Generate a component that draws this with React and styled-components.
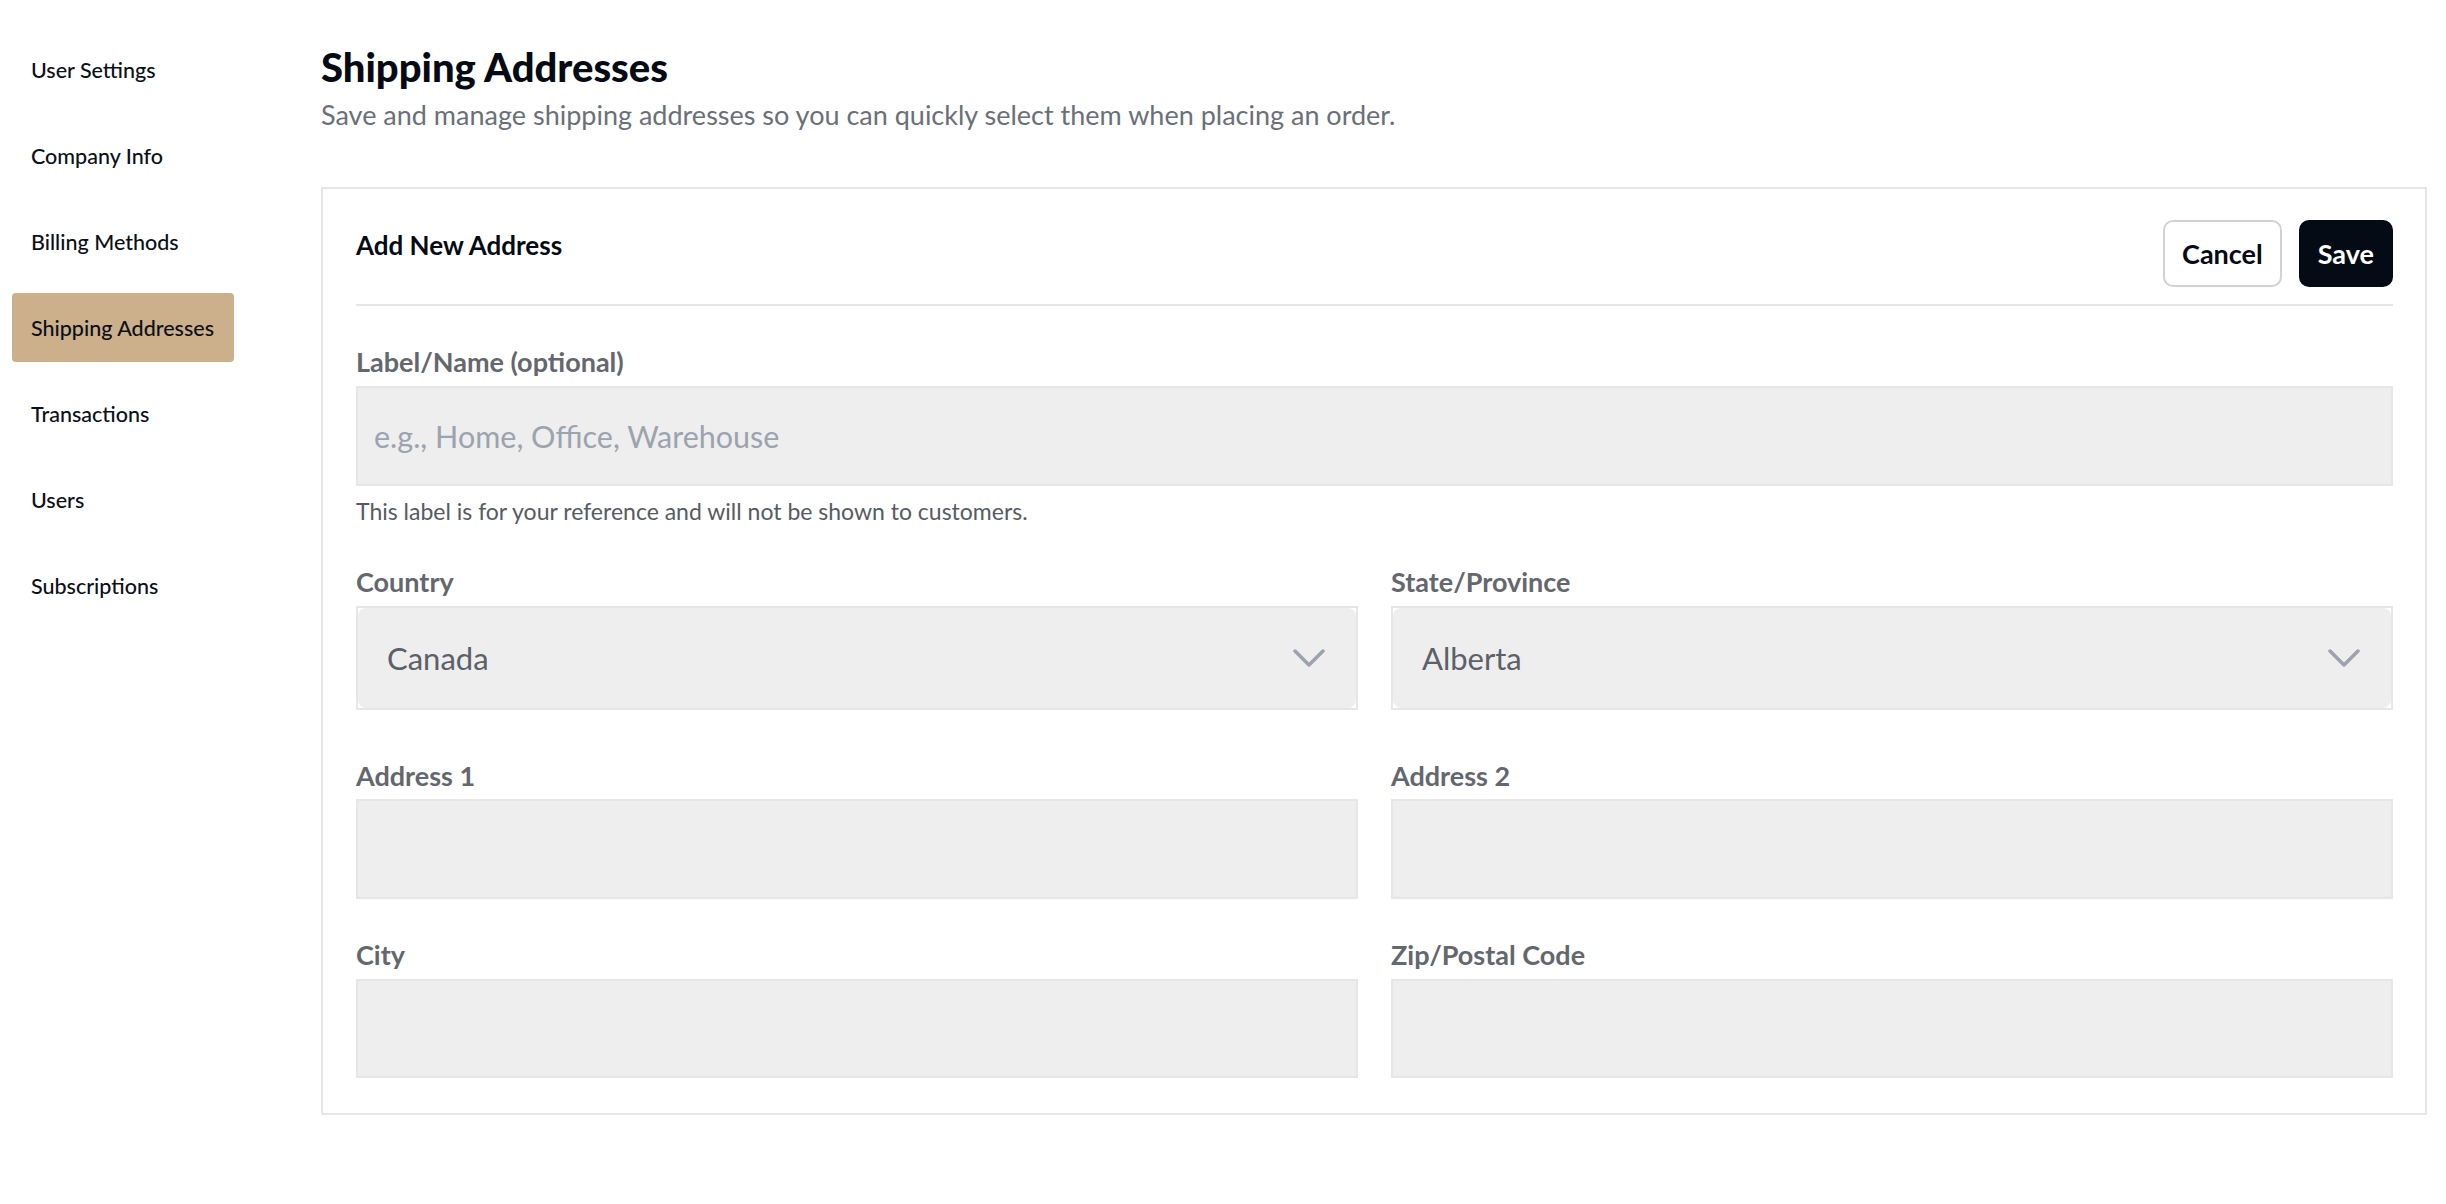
import styled, { createGlobalStyle } from "styled-components";

const GlobalStyle = createGlobalStyle`
  * {
    box-sizing: border-box;
  }
  body {
    margin: 0;
    background: #ffffff;
    font-family: Lato, "Noto Sans", sans-serif;
    color: #0b0f17;
  }
`

const Layout = styled.div`
    display: grid;
    grid-template-columns: 222px 1fr;
    column-gap: 87px;
    padding: 0 19px 0 12px;
    min-height: 1204px;
`
const Sidebar = styled.nav`
    display: flex;
    flex-direction: column;
    gap: 17px;
    padding-top: 35px;
`
const NavItem = styled.div`
    height: 69px;
    display: flex;
    align-items: center;
    padding-left: 19px;
    border-radius: 4px;
    font-size: 21.5px;
    font-weight: 500;
    color: #0b0f17;
    white-space: nowrap;
    background-color: ${(p) => (p.$active ? "#ccb08c" : "transparent")};
    cursor: pointer;
`
const Main = styled.main`
    padding-top: 44px;
`
const Title = styled.h1`
    margin: 0;
    font-size: 40px;
    line-height: 46px;
    font-weight: 900;
    color: #050a14;
`
const Subtitle = styled.p`
    margin: 8px 0 0;
    font-size: 27px;
    line-height: 34px;
    color: #6b7078;
`
const Card = styled.section`
    margin-top: 55px;
    border: 2px solid #e6e6e6;
    padding: 31px 32px 35px 33px;
`
const CardHeader = styled.div`
    display: flex;
    justify-content: space-between;
    align-items: flex-start;
    padding-bottom: 17px;
    border-bottom: 2px solid #e6e6e6;
`
const CardTitle = styled.h2`
    margin: 0;
    font-size: 26px;
    line-height: 50px;
    font-weight: 700;
    color: #050a14;
`
const Actions = styled.div`
    display: flex;
    gap: 17px;
`
const Button = styled.button`
    height: 67px;
    padding: 0 17px;
    border-radius: 10px;
    font-family: inherit;
    font-size: 27px;
    font-weight: 700;
    cursor: pointer;
    border: 2px solid ${(p) => (p.$primary ? "#050b14" : "#d2d2d2")};
    background-color: ${(p) => (p.$primary ? "#050b14" : "#ffffff")};
    color: ${(p) => (p.$primary ? "#ffffff" : "#050a14")};
`
const Form = styled.div`
    display: flex;
    flex-direction: column;
    gap: 38px;
    padding-top: 38px;
`
const Row = styled.div`
    display: grid;
    grid-template-columns: 1fr 1fr;
    column-gap: 33px;
    padding-bottom: ${(p) => (p.$extra ? "10px" : "0")};
`
const Field = styled.div`
    display: flex;
    flex-direction: column;
`
const Label = styled.label`
    font-size: 27px;
    line-height: 36px;
    font-weight: 700;
    color: #64676d;
    margin-bottom: ${(p) => (p.$tight ? "5px" : "6px")};
`
const Input = styled.input`
    height: ${(p) => p.$h || 100}px;
    width: 100%;
    border: 2px solid #e6e6e6;
    background-color: #eeeeee;
    padding: 0 16px;
    font-family: inherit;
    font-size: 30.5px;
    color: #5f636a;
    outline: none;

    &::placeholder {
        color: #9ca3af;
    }
`
const Helper = styled.p`
    margin: 10px 0 0;
    font-size: 23px;
    line-height: 30px;
    color: #565b62;
`
const SelectFrame = styled.div`
    height: 104px;
    border: 2px solid #e6e6e6;
    background-color: #ffffff;
`
const SelectInner = styled.div`
    height: 100%;
    display: flex;
    align-items: center;
    justify-content: space-between;
    padding: 0 31px 0 29px;
    border-radius: 8px;
    background-color: #eeeeee;
    font-size: 31px;
    color: #5c6067;
`

const Chevron = () => (
    <svg width="32" height="18" viewBox="0 0 32 18" fill="none">
        <path d="M2 2 L16 16 L30 2" stroke="#9ca3af" strokeWidth="3.5" strokeLinecap="round" strokeLinejoin="round" />
    </svg>
)

const Select = ({ value }) => (
    <SelectFrame>
        <SelectInner>
            <span>{value}</span>
            <Chevron />
        </SelectInner>
    </SelectFrame>
)

const navItems = [
    "User Settings",
    "Company Info",
    "Billing Methods",
    "Shipping Addresses",
    "Transactions",
    "Users",
    "Subscriptions",
]

const App = () => {
    return (
        <>
            <GlobalStyle />
            <Layout>
                <Sidebar>
                    {navItems.map((item) => (
                        <NavItem key={item} $active={item === "Shipping Addresses"}>
                            {item}
                        </NavItem>
                    ))}
                </Sidebar>
                <Main>
                    <Title>Shipping Addresses</Title>
                    <Subtitle>
                        Save and manage shipping addresses so you can quickly select them when placing an order.
                    </Subtitle>
                    <Card>
                        <CardHeader>
                            <CardTitle>Add New Address</CardTitle>
                            <Actions>
                                <Button>Cancel</Button>
                                <Button $primary>Save</Button>
                            </Actions>
                        </CardHeader>
                        <Form>
                            <Field>
                                <Label>Label/Name (optional)</Label>
                                <Input placeholder="e.g., Home, Office, Warehouse" />
                                <Helper>This label is for your reference and will not be shown to customers.</Helper>
                            </Field>
                            <Row $extra>
                                <Field>
                                    <Label>Country</Label>
                                    <Select value="Canada" />
                                </Field>
                                <Field>
                                    <Label>State/Province</Label>
                                    <Select value="Alberta" />
                                </Field>
                            </Row>
                            <Row>
                                <Field>
                                    <Label $tight>Address 1</Label>
                                    <Input />
                                </Field>
                                <Field>
                                    <Label $tight>Address 2</Label>
                                    <Input />
                                </Field>
                            </Row>
                            <Row>
                                <Field>
                                    <Label>City</Label>
                                    <Input $h={99} />
                                </Field>
                                <Field>
                                    <Label>Zip/Postal Code</Label>
                                    <Input $h={99} />
                                </Field>
                            </Row>
                        </Form>
                    </Card>
                </Main>
            </Layout>
        </>
    )
};

export default App;
